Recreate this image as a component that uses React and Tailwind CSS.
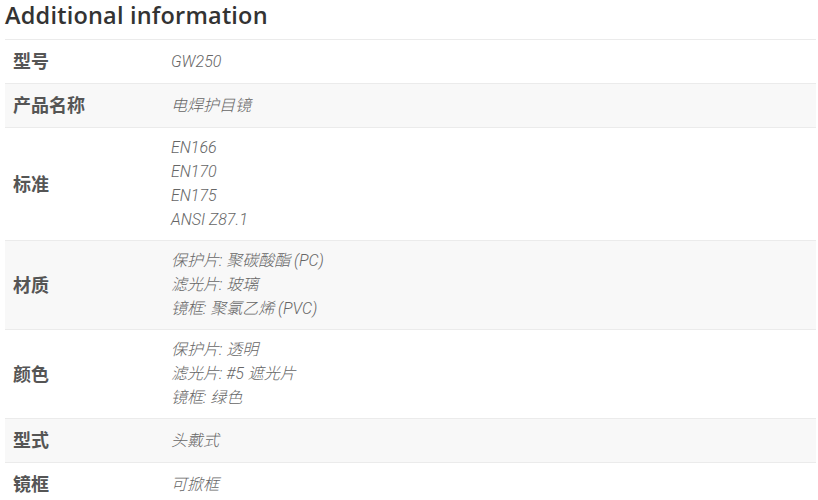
// Additional information — product attributes table

const rows = [
  { label: '型号', values: ['GW250'], h: 'h-[44px]' },
  { label: '产品名称', values: ['电焊护目镜'], h: 'h-[44px]' },
  { label: '标准', values: ['EN166', 'EN170', 'EN175', 'ANSI Z87.1'], h: 'h-[113px]' },
  { label: '材质', values: ['保护片: 聚碳酸酯 (PC)', '滤光片: 玻璃', '镜框: 聚氯乙烯 (PVC)'], h: 'h-[89px]' },
  { label: '颜色', values: ['保护片: 透明', '滤光片: #5 遮光片', '镜框: 绿色'], h: 'h-[89px]' },
  { label: '型式', values: ['头戴式'], h: 'h-[44px]' },
  { label: '镜框', values: ['可掀框'], h: 'h-[44px]' },
]

const App = () => {
  return (
    <div className="w-[818px] h-[500px] overflow-hidden bg-white px-[5px] font-['Open_Sans','Noto_Sans_CJK_SC',sans-serif]">

      {/* Title */}
      <h2 className="text-[#333] text-[23.5px] font-semibold leading-[30px] h-[39px] tracking-[0.2px]">
        Additional information
      </h2>

      {/* Attributes */}
      <table className="w-[811px] border-collapse">
        <tbody>
          {rows.map((row, i) => (
            <tr
              key={row.label}
              className={`${row.h} border-t border-[#ebebeb] ${i % 2 === 1 ? 'bg-[#f8f8f8]' : 'bg-white'}`}
            >
              <th className="w-[166px] pl-2 text-left align-middle text-[18px] font-bold text-[#555]">
                {row.label}
              </th>
              <td className="align-middle text-[16px] italic font-light leading-6 text-[#666] font-['Roboto','Noto_Sans_CJK_SC',sans-serif]">
                {row.values.map((v) => (
                  <div key={v}>{v}</div>
                ))}
              </td>
            </tr>
          ))}
        </tbody>
      </table>

    </div>
  )
}

export default App
